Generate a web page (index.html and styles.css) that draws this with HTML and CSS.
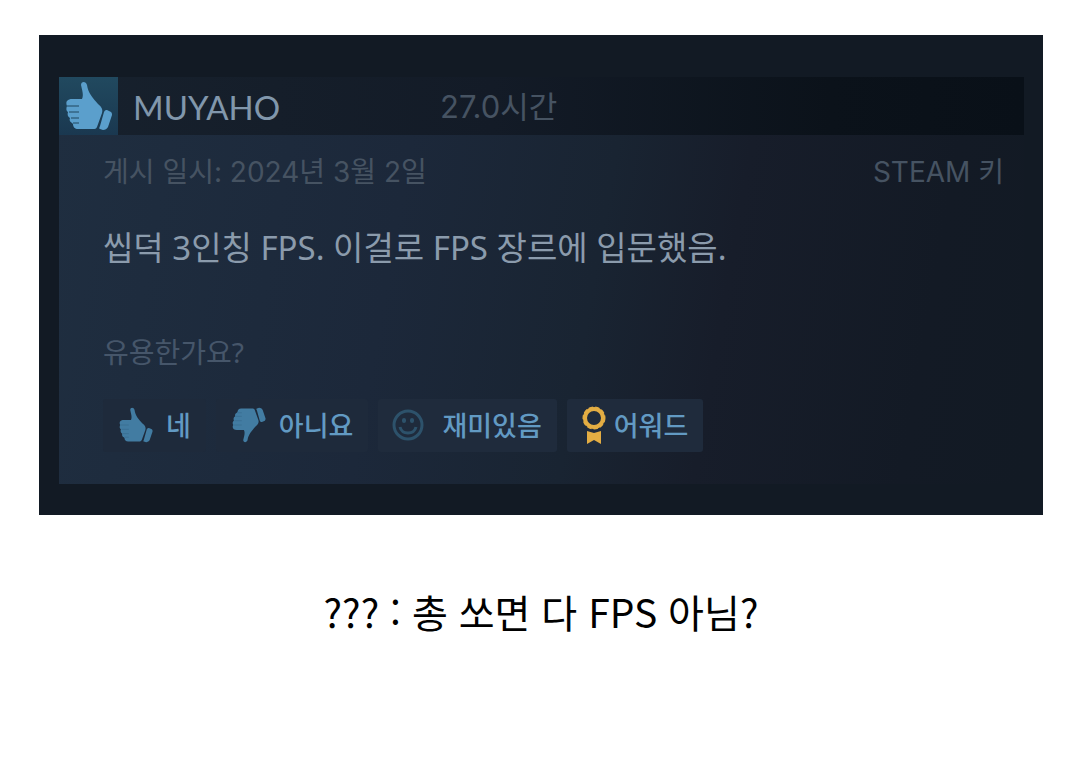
FILE: index.html
```html
<!DOCTYPE html>
<html lang="ko">
<head>
  <meta charset="UTF-8">
  <meta name="viewport" content="width=device-width, initial-scale=1.0">
  <title>MUYAHO</title>
  <link rel="stylesheet" href="styles.css">
</head>
<body>

  <!-- shared hand shape -->
  <svg class="defs" width="0" height="0" aria-hidden="true">
    <symbol id="thumb" viewBox="0 0 48 50">
      <path d="M16 4C16 0 21 0 22 4C23 12 28 17 33 23C37 26 38 29 37 32L32 46C31 48 30 48 28 48L13 48C10 48 8 46 8 43L7 42C5 41 4 39 5 37C3 36 2 34 3 31C1 30 1 27 2 25C0 20 3 18 7 18L17 18C19 14 17 9 16 4Z"/>
      <path d="M42 29L46 31C47 32 47 33 47 34L43 46C42 48 40 49 38 49L35 48C34 48 34 47 35 45L39 31C40 29 41 29 42 29Z"/>
      <path class="finger" d="M2 25H14M4 31H14M6 37H14M8 42H14"/>
    </symbol>
  </svg>

  <main class="post">
    <div class="frame">
      <article class="review">
        <header class="review-header">
          <div class="rating">
            <svg class="rating-icon" role="img" aria-label="추천"><use href="#thumb"/></svg>
          </div>
          <h1 class="author">MUYAHO</h1>
          <span class="hours">27.0시간</span>
        </header>

        <div class="review-body">
          <div class="meta">
            <span>게시 일시: 2024년 3월 2일</span>
            <span>STEAM 키</span>
          </div>
          <p class="review-text">씹덕 3인칭 FPS. 이걸로 FPS 장르에 입문했음.</p>
          <p class="question">유용한가요?</p>

          <div class="actions">
            <button class="btn btn-faint" type="button">
              <svg class="hand" aria-hidden="true"><use href="#thumb"/></svg>
              네
            </button>
            <button class="btn btn-faint" type="button">
              <svg class="hand hand-down" aria-hidden="true"><use href="#thumb"/></svg>
              아니요
            </button>
            <button class="btn btn-funny" type="button">
              <svg class="smile" viewBox="0 0 32 32" aria-hidden="true">
                <circle cx="16" cy="16" r="14"/>
                <path d="M8 18C10 26 22 26 24 18"/>
                <path class="eyes" d="M12 11V12M20 11V12"/>
              </svg>
              재미있음
            </button>
            <button class="btn btn-award" type="button">
              <svg class="award" viewBox="0 0 24 38" aria-hidden="true">
                <path class="ribbon" d="M5 25L12 27L19 25V38L12 34L5 38Z"/>
                <circle class="scallop" cx="12" cy="12" r="10"/>
                <circle class="ring" cx="12" cy="12" r="9"/>
              </svg>
              어워드
            </button>
          </div>
        </div>
      </article>
    </div>

    <p class="caption">??? : 총 쏘면 다 FPS 아님?</p>
  </main>

</body>
</html>
```
FILE: styles.css
```css
* {
  box-sizing: border-box;
}
body {
  margin: 0;
  background-color: #fff;
  font-family: "Noto Sans", "Noto Sans CJK KR", sans-serif;
}
h1, p {
  margin: 0;
  font-weight: 400;
}
.defs {
  display: block;
}
.post {
  padding: 35px 37px 35px 39px;
}
.frame {
  padding: 42px 19px 31px 20px;
  background-color: #121a24;
}
.review {
  background: linear-gradient(100deg, #1f2e40 0%, #1c283a 35%, #192432 55%, #171d2a 68%, #131a25 88%, #121a24 100%);
}

/* Header */
.review-header {
  display: grid;
  grid-template-columns: 59px 307px 1fr;
  align-items: center;
  height: 58px;
  padding-right: 16px;
  background: linear-gradient(90deg, #17212d 0%, #131b27 45%, #0b121a 80%, #091018 100%);
}
.rating {
  display: flex;
  align-items: center;
  justify-content: center;
  height: 58px;
  background: linear-gradient(#21495f, #1a3850);
}
.rating-icon {
  width: 48px;
  height: 50px;
  fill: #5b9fcc;
  stroke: #21465f;
}
.rating-icon, .hand {
  stroke-width: 0;
}
.finger {
  fill: none;
  stroke-width: 1px;
}
.author {
  padding: 2px 0 0 15px;
  font-family: Lato, "Noto Sans CJK KR", sans-serif;
  font-size: 33px;
  line-height: 40px;
  color: #8197ac;
}
.hours, .meta {
  font-family: Inter, "Noto Sans CJK KR", sans-serif;
  font-size: 28px;
  line-height: 40px;
  color: #465362;
}
.hours {
  padding: 2px 0 0 15px;
  font-size: 31px;
}

/* Body */
.review-body {
  padding: 17px 20px 32px 44px;
}
.meta {
  display: flex;
  justify-content: space-between;
}
.review-text {
  margin-top: 32px;
  font-size: 33px;
  line-height: 48px;
  color: #8b9bac;
}
.question {
  margin-top: 60px;
  font-size: 28px;
  line-height: 40px;
  color: #46566a;
}

/* Buttons */
.actions {
  display: flex;
  flex-wrap: wrap;
  gap: 10px;
  margin-top: 27px;
}
.btn {
  display: flex;
  align-items: center;
  gap: 12px;
  height: 53px;
  padding: 0 15px 2px;
  border: none;
  border-radius: 3px;
  background-color: #1f2b3c;
  font-family: "Noto Sans CJK KR", sans-serif;
  font-size: 27px;
  font-weight: 500;
  line-height: 40px;
  color: #629ac3;
  cursor: pointer;
}
.btn:hover {
  background-color: #2b3e54;
}
.btn-faint {
  background-color: #1e2a3b;
}
.btn-funny {
  gap: 18px;
  padding-left: 14px;
}
.btn-award {
  gap: 8px;
}
.hand {
  width: 36px;
  height: 36px;
  fill: #427ca2;
  stroke: #386c90;
}
.hand-down {
  transform: scaleY(-1);
}
.smile {
  width: 32px;
  height: 32px;
  fill: none;
  stroke: #2d526b;
  stroke-width: 3;
}
.eyes {
  stroke-width: 4;
  stroke-linecap: round;
}
.award {
  width: 24px;
  height: 38px;
  fill: none;
}
.ribbon {
  fill: #e3ad43;
}
.scallop {
  stroke: #e3ad43;
  stroke-width: 3;
  stroke-dasharray: 4 2;
}
.ring {
  stroke: #e3ad43;
  stroke-width: 4;
}

/* Caption */
.caption {
  margin-top: 66px;
  font-family: "Noto Sans CJK KR", sans-serif;
  font-size: 39px;
  line-height: 60px;
  text-align: center;
  color: #000;
}
```
